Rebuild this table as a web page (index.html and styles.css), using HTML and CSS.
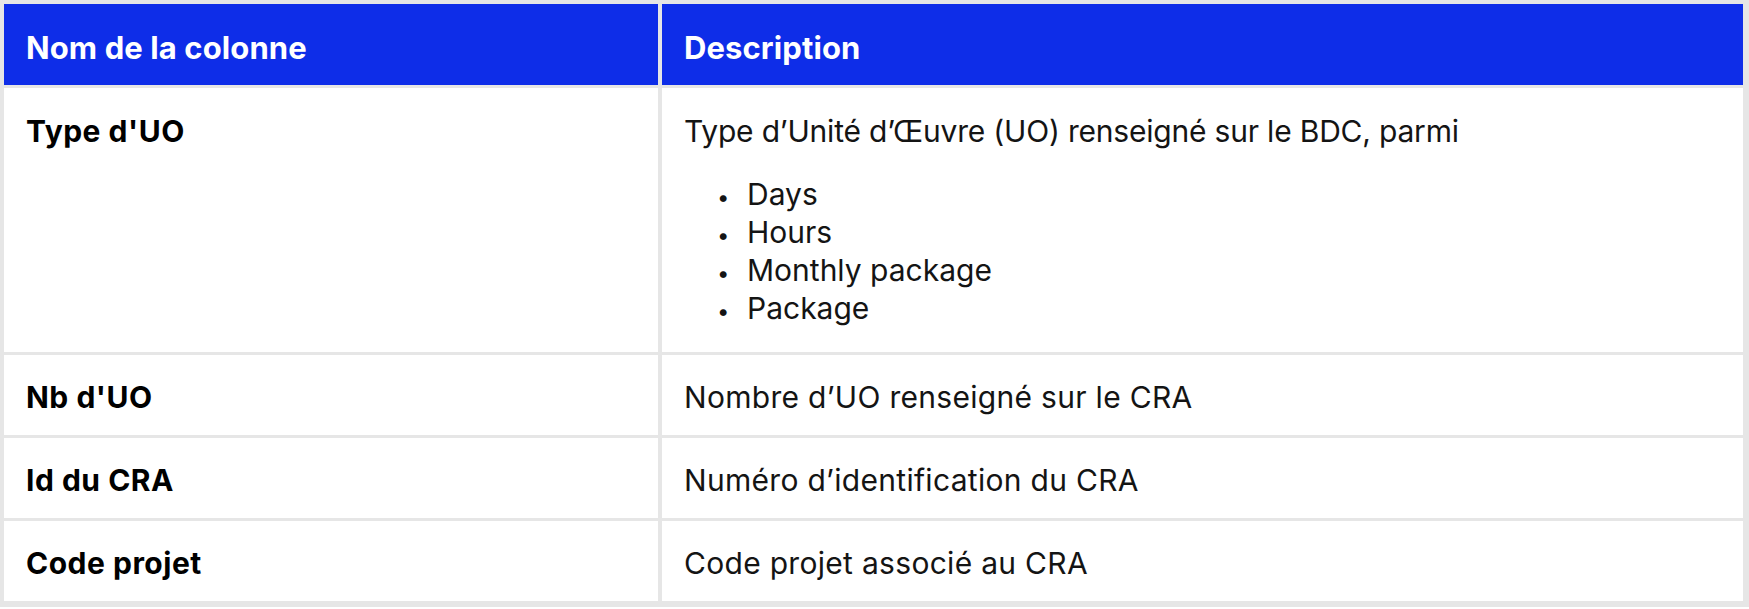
FILE: index.html
```html
<!DOCTYPE html>
<html lang="fr">
<head>
<meta charset="utf-8">
<title>Colonnes</title>
<link rel="stylesheet" href="styles.css">
</head>
<body>
<table class="spec">
  <thead>
    <tr>
      <th class="col-name">Nom de la colonne</th>
      <th class="col-desc">Description</th>
    </tr>
  </thead>
  <tbody>
    <tr>
      <td class="name name-top">Type d'UO</td>
      <td class="desc">
        <p class="lead">Type d’Unité d’Œuvre (UO) renseigné sur le BDC, parmi</p>
        <ul class="options">
          <li>Days</li>
          <li>Hours</li>
          <li>Monthly package</li>
          <li>Package</li>
        </ul>
      </td>
    </tr>
    <tr>
      <td class="name">Nb d'UO</td>
      <td class="desc">Nombre d’UO renseigné sur le CRA</td>
    </tr>
    <tr>
      <td class="name">Id du CRA</td>
      <td class="desc">Numéro d’identification du CRA</td>
    </tr>
    <tr>
      <td class="name">Code projet</td>
      <td class="desc">Code projet associé au CRA</td>
    </tr>
  </tbody>
</table>
</body>
</html>
```

FILE: styles.css
```css
html, body {
  margin: 0;
  padding: 0;
  background: #ffffff;
}

body {
  font-family: Inter, "Noto Sans", "Liberation Sans", sans-serif;
  color: #111111;
}

.spec {
  width: 1749px;
  border-collapse: separate;
  border-spacing: 4px 3px;
  padding: 1px 2px 3px 0;
  background: #e6e6e6;
  table-layout: fixed;
}

.spec th,
.spec td {
  text-align: left;
  vertical-align: middle;
  font-size: 30px;
  line-height: 38px;
  padding: 23px 22px 19px;
}

.spec th {
  background: #0e2de8;
  color: #ffffff;
  font-weight: 700;
  font-size: 31px;
  padding-top: 25px;
  padding-bottom: 18px;
  letter-spacing: 0.1px;
}

.col-name {
  width: 610px;
}

.spec td {
  background: #ffffff;
}

.spec .name {
  font-weight: 700;
  color: #000000;
  letter-spacing: 0.5px;
}

.spec .name-top {
  vertical-align: top;
  padding-top: 24px;
}

.spec .desc {
  font-weight: 400;
  color: #141414;
  letter-spacing: 0.3px;
}

.spec .name-top + .desc {
  padding-top: 21px;
  padding-bottom: 21px;
}

.lead {
  margin: 3px 0 25px;
  letter-spacing: -0.2px;
}

.options {
  margin: 0 0 4px;
  padding-left: 33px;
  list-style: none;
  letter-spacing: 0;
}

.options li {
  display: block;
}

.options li::before {
  content: "•";
  display: inline-block;
  width: 30px;
  font-size: 22px;
  line-height: 1;
  vertical-align: baseline;
}
```
